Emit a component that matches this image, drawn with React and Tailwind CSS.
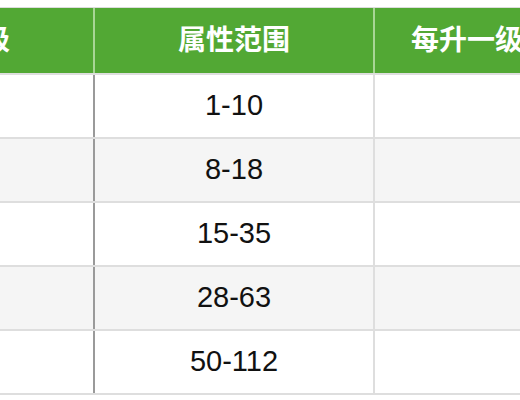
const rows = [
  { level: '1', range: '1-10', grow: '+1' },
  { level: '2', range: '8-18', grow: '+2' },
  { level: '3', range: '15-35', grow: '+3' },
  { level: '4', range: '28-63', grow: '+5' },
  { level: '5', range: '50-112', grow: '+8' },
];

export default function App() {
  return (
    <div
      className="w-[520px] h-[400px] overflow-hidden bg-white pt-[7px]"
      style={{ fontFamily: '"Liberation Sans", "Noto Sans CJK SC", sans-serif' }}
    >
      <div className="ml-[-129px] w-[800px] border-t border-[#dcdcdc]">
        <div className="flex h-[65px] bg-[#52a834] text-[28px] font-bold text-white">
          <div className="w-[224px] flex items-center justify-center border-r-2 border-[#a8d695]">等级</div>
          <div className="w-[280px] flex items-center justify-center border-r-2 border-[#a8d695]">属性范围</div>
          <div className="w-[296px] flex items-center justify-center">每升一级属性加成</div>
        </div>
        {rows.map((r, i) => (
          <div
            key={r.range}
            className={`flex h-[64px] border-t-2 border-[#dedede] text-[29px] text-[#111111] ${i % 2 === 1 ? 'bg-[#f5f5f5]' : 'bg-white'}`}
          >
            <div className="w-[224px] flex items-center justify-center border-r-2 border-[#9a9a9a]">{r.level}</div>
            <div className="w-[280px] flex items-center justify-center border-r-2 border-[#dedede]">{r.range}</div>
            <div className="w-[296px] flex items-center justify-center"></div>
          </div>
        ))}
        <div className="border-t-2 border-[#dedede]" />
      </div>
    </div>
  );
}
